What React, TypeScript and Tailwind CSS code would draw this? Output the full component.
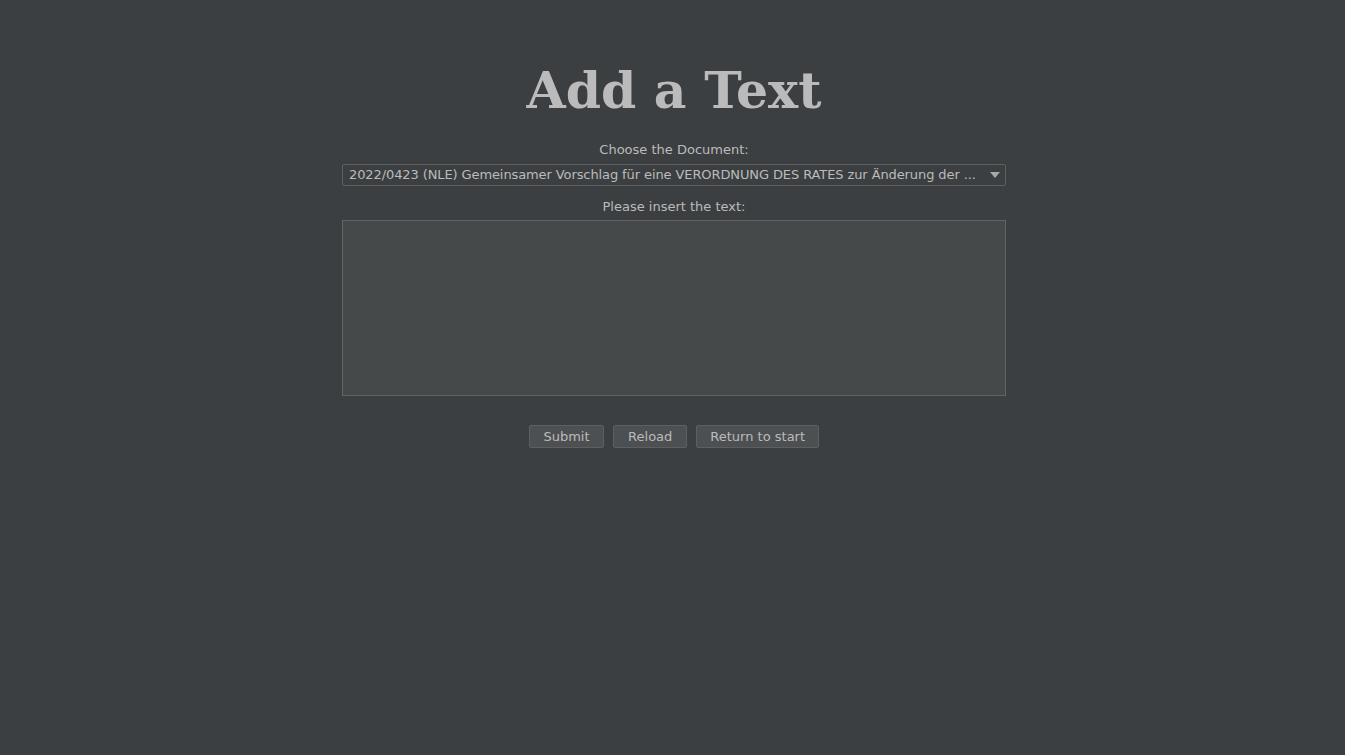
import React from "react";

export default function App() {
  return (
    <div className="w-[1345px] h-[755px] bg-[#3c3f41] text-[#bbbbbb] flex flex-col items-center pl-[3px]" style={{ fontFamily: '"DejaVu Sans", sans-serif' }}>
      <h1 className="mt-[58px] h-[66px] leading-[66px] text-[50.5px] font-bold text-[#bbbbbb]" style={{ fontFamily: '"DejaVu Serif", serif' }}>
        Add a Text
      </h1>
      <div className="mt-[17px] text-[13px] leading-[17px]">Choose the Document:</div>
      <div className="mt-[6px] w-[664px] h-[22px] border border-[#5e6060] rounded-[2px] bg-[#3c3f41] flex items-center pl-[6px] pr-[5px] text-[13px]">
        <span className="flex-1 whitespace-nowrap overflow-hidden tracking-[-0.1px]">2022/0423 (NLE) Gemeinsamer Vorschlag für eine VERORDNUNG DES RATES zur Änderung der ...</span>
        <svg width="10" height="6" viewBox="0 0 10 6" className="ml-[8px] shrink-0">
          <polygon points="0,0 10,0 5,6" fill="#a9a9a9" />
        </svg>
      </div>
      <div className="mt-[12px] text-[13px] leading-[17px]">Please insert the text:</div>
      <div className="mt-[5px] w-[664px] h-[176px] border border-[#646464] bg-[#45494a]" />
      <div className="mt-[29px] flex gap-[9px] text-[13px]">
        <button className="h-[23px] px-[13.5px] border border-[#5e6060] rounded-[2px] bg-[#4c5052] text-[#bbbbbb]">Submit</button>
        <button className="h-[23px] px-[14px] border border-[#5e6060] rounded-[2px] bg-[#4c5052] text-[#bbbbbb]">Reload</button>
        <button className="h-[23px] px-[13px] border border-[#5e6060] rounded-[2px] bg-[#4c5052] text-[#bbbbbb]">Return to start</button>
      </div>
    </div>
  );
}
